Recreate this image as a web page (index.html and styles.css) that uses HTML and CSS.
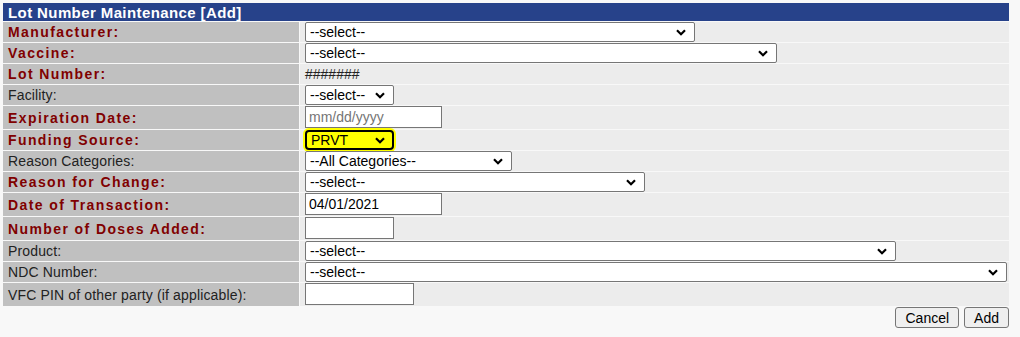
FILE: index.html
```html
<!DOCTYPE html>
<html lang="en">
<head>
    <meta charset="UTF-8">
    <meta name="viewport" content="width=device-width, initial-scale=1.0">
    <title>Lot Number Maintenance</title>
    <link rel="stylesheet" href="styles.css">
</head>
<body>
    <table class="form-table">
        <colgroup>
            <col class="col-label">
            <col class="col-value">
        </colgroup>
        <tr>
            <th colspan="2" class="form-title">Lot Number Maintenance [Add]</th>
        </tr>
        <tr>
            <td class="label req">Manufacturer:</td>
            <td class="value"><select class="w-390"><option>--select--</option></select></td>
        </tr>
        <tr>
            <td class="label req">Vaccine:</td>
            <td class="value"><select class="w-472"><option>--select--</option></select></td>
        </tr>
        <tr>
            <td class="label req">Lot Number:</td>
            <td class="value">#######</td>
        </tr>
        <tr>
            <td class="label">Facility:</td>
            <td class="value"><select class="w-89"><option>--select--</option></select></td>
        </tr>
        <tr class="tall">
            <td class="label req">Expiration Date:</td>
            <td class="value"><input type="text" class="w-137" placeholder="mm/dd/yyyy"></td>
        </tr>
        <tr>
            <td class="label req">Funding Source:</td>
            <td class="value"><select class="w-89 active"><option>PRVT</option></select></td>
        </tr>
        <tr>
            <td class="label">Reason Categories:</td>
            <td class="value"><select class="w-207"><option>--All Categories--</option></select></td>
        </tr>
        <tr>
            <td class="label req">Reason for Change:</td>
            <td class="value"><select class="w-340"><option>--select--</option></select></td>
        </tr>
        <tr class="tall">
            <td class="label req">Date of Transaction:</td>
            <td class="value"><input type="text" class="w-137" value="04/01/2021"></td>
        </tr>
        <tr class="tall">
            <td class="label req">Number of Doses Added:</td>
            <td class="value"><input type="text" class="w-89"></td>
        </tr>
        <tr>
            <td class="label">Product:</td>
            <td class="value"><select class="w-591"><option>--select--</option></select></td>
        </tr>
        <tr>
            <td class="label">NDC Number:</td>
            <td class="value"><select class="w-702"><option>--select--</option></select></td>
        </tr>
        <tr class="tall">
            <td class="label">VFC PIN of other party (if applicable):</td>
            <td class="value"><input type="text" class="w-109"></td>
        </tr>
    </table>

    <div class="form-actions">
        <button>Cancel</button>
        <button>Add</button>
    </div>
</body>
</html>
```

FILE: styles.css
```css
body {
    margin: 2px;
    background-color: #f8f8f8;
    font-family: "Liberation Sans", Arial, sans-serif;
    font-size: 14px;
    color: #222;
}
.form-table {
    width: 1008px;
    table-layout: fixed;
    border-collapse: separate;
    border-spacing: 1px;
}
.col-label {
    width: 296px;
}
.form-title {
    height: 18px;
    padding: 0 5px;
    background-color: #27428a;
    color: #fff;
    font-size: 15px;
    font-weight: bold;
    letter-spacing: 0.4px;
    text-align: left;
}
.form-table td {
    padding: 0;
    height: 20px;
    white-space: nowrap;
}
.form-table tr.tall td {
    height: 23px;
    vertical-align: top;
}
.form-table tr.tall td.label {
    vertical-align: middle;
}
.label {
    padding-left: 5px !important;
    background-color: #c0c0c0;
    color: #222;
    letter-spacing: 0.15px;
}
.label.req {
    color: #800000;
    font-weight: bold;
    letter-spacing: 1.4px;
}
.value {
    padding-left: 5px !important;
    background-color: #ececec;
}
.value select,
.value input {
    display: block;
    box-sizing: border-box;
    font-family: "Liberation Sans", Arial, sans-serif;
    font-size: 14px;
    color: #000;
    background-color: #fff;
    border: 1px solid #767676;
    margin: 0;
}
.value select {
    height: 20px;
    padding: 0 20px 0 4px;
    border-radius: 2px;
    appearance: none;
    -webkit-appearance: none;
    background-image: url("data:image/svg+xml;utf8,<svg xmlns='http://www.w3.org/2000/svg' width='10' height='7' viewBox='0 0 10 7'><path d='M1 1.2 L5 5.2 L9 1.2' fill='none' stroke='black' stroke-width='2.2'/></svg>");
    background-repeat: no-repeat;
    background-position: right 8px center;
}
.value input {
    height: 22px;
    padding: 1px 3px;
}
.value select.active {
    background-color: #ffff00;
    border: 2px solid #000;
    border-radius: 4px;
    box-shadow: 0 0 0 2px #ffff00;
    background-position: right 7px center;
}
.w-89 { width: 89px; }
.w-109 { width: 109px; }
.w-137 { width: 137px; }
.w-207 { width: 207px; }
.w-340 { width: 340px; }
.w-390 { width: 390px; }
.w-472 { width: 472px; }
.w-591 { width: 591px; }
.w-702 { width: 702px; }
.form-actions {
    width: 1007px;
    display: flex;
    justify-content: flex-end;
    gap: 5px;
    margin-top: 0;
}
.form-actions button {
    height: 21px;
    padding: 0 9px;
    font-family: "Liberation Sans", Arial, sans-serif;
    font-size: 14px;
    color: #000;
    background-color: #efefef;
    border: 1px solid #767676;
    border-radius: 3px;
}
```
